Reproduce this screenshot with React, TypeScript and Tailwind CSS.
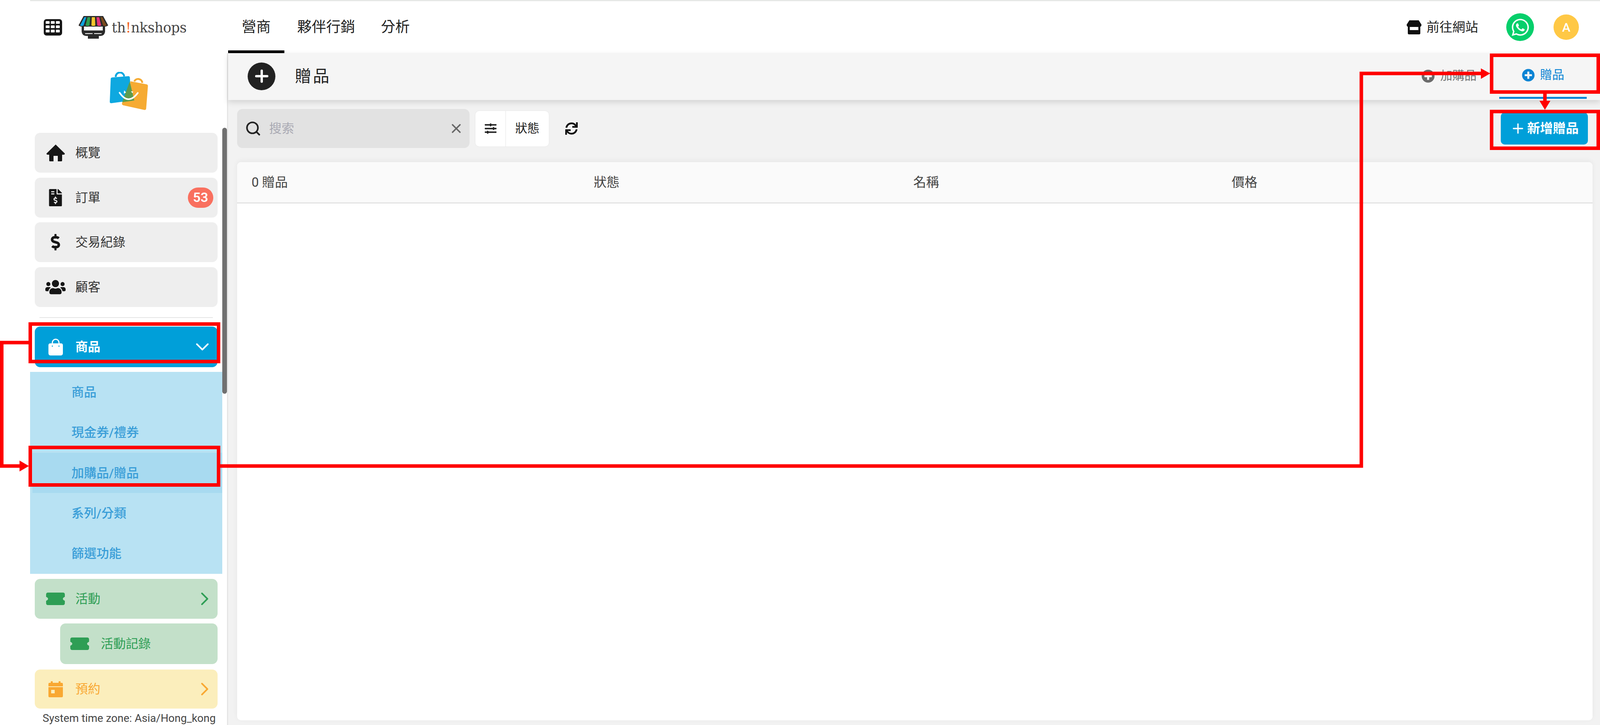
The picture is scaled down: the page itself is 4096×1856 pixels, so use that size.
import { ReactNode } from "react";
import { ChevronDown, ChevronRight, Plus, Search, X } from "lucide-react";
import {
  FaDollarSign,
  FaFileInvoiceDollar,
  FaPlusCircle,
  FaSlidersH,
  FaSync,
  FaUsers,
  FaWhatsapp,
} from "react-icons/fa";

function GridIcon() {
  const cells = [4, 17, 30];
  const rows = [5, 16, 27];
  return (
    <svg width="47" height="42" viewBox="0 0 47 42">
      <rect width="47" height="42" rx="7" fill="#161616" />
      {rows.map((y) =>
        cells.map((x) => <rect key={`${x}-${y}`} x={x + 1} y={y} width="10" height="7" rx="1.5" fill="#fff" />)
      )}
    </svg>
  );
}

function ShopLogo() {
  return (
    <svg width="78" height="62" viewBox="0 0 78 62">
      <path d="M9 26 L9 42 Q10 52 20 53 L25 53 L25 60 L53 60 L53 53 L58 53 Q68 52 69 42 L69 26 Z" fill="#2b2b2b" />
      <path d="M15 29 H63 V39 H15 Z" fill="#fff" />
      <rect x="18" y="46" width="19" height="2" fill="#fff" />
      <rect x="41" y="46" width="19" height="2" fill="#fff" />
      <path d="M14 2 H64 L77 26 Q70 32 62 27 Q55 32 47 27 Q39 32 31 27 Q23 32 15 27 Q8 32 1 26 Z" fill="#2b2b2b" />
      <path d="M5 26 L16 5 H21 L14 26 Q10 29 5 26 Z" fill="#0ea5e0" />
      <path d="M19 26 L24 5 H31 L29 26 Q24 29 19 26 Z" fill="#2e9e4f" />
      <path d="M34 26 L35 5 H43 L44 26 Q39 29 34 26 Z" fill="#f5c52c" />
      <path d="M49 26 L47 5 H54 L59 26 Q54 29 49 26 Z" fill="#e6337c" />
      <path d="M64 26 L57 5 H62 L73 26 Q68 29 64 26 Z" fill="#7a4a1c" />
    </svg>
  );
}

function BagsLogo() {
  return (
    <svg width="98" height="99" viewBox="0 0 320 315">
      <path d="M50 38 A35 35 0 0 1 120 34" fill="none" stroke="#0ea8e0" strokeWidth="16" />
      <path d="M205 76 A35 35 0 0 1 272 88" fill="none" stroke="#f6ab33" strokeWidth="16" />
      <path d="M20 42 L155 32 Q168 32 168 44 L180 235 L12 258 Q0 258 0 246 L8 54 Q8 44 20 42 Z" fill="#0ea8e0" />
      <path d="M172 74 L310 100 Q320 104 319 114 L304 305 Q300 316 290 314 L112 275 Q100 270 102 258 L108 245 L165 235 Z" fill="#f6ab33" />
      <path d="M167 75 L205 235 L104 250 Z" fill="#5c9c4e" />
      <path d="M82 170 Q155 278 234 172" fill="none" stroke="#fff" strokeWidth="13" strokeLinecap="round" />
      <path d="M120 150 L136 168 L118 178 Z" fill="#fff" />
      <path d="M176 158 L196 160 L190 174 Z" fill="#fff" />
    </svg>
  );
}

function HomeIcon() {
  return (
    <svg width="47" height="43" viewBox="0 0 47 43" fill="#161616">
      <path d="M23.5 0 L47 23 Q47 26 44 26 L40 26 L40 41 Q40 43 38 43 L29 43 L29 29 L18 29 L18 43 L9 43 Q7 43 7 41 L7 26 L3 26 Q0 26 0 23 Z" />
    </svg>
  );
}

function StoreIcon() {
  return (
    <svg width="38" height="36" viewBox="0 0 38 36" fill="#111">
      <path d="M7 0 H31 L38 11 Q38 17 32 17 L6 17 Q0 17 0 11 Z" />
      <path d="M3 15 H8 V25 H30 V15 H35 V33 Q35 36 32 36 H6 Q3 36 3 33 Z" />
    </svg>
  );
}

function BagIcon() {
  return (
    <svg width="37" height="43" viewBox="0 0 37 43">
      <path d="M10 15 V10 A8.5 8.5 0 0 1 27 10 V15" fill="none" stroke="#fff" strokeWidth="3" />
      <path d="M5 12 H32 Q37 12 37 17 V37 Q37 43 31 43 H6 Q0 43 0 37 V17 Q0 12 5 12 Z" fill="#fff" />
      <circle cx="10" cy="19" r="1.6" fill="#009fd9" />
      <circle cx="27" cy="19" r="1.6" fill="#009fd9" />
    </svg>
  );
}

function TicketIcon() {
  return (
    <svg width="48" height="32" viewBox="0 0 48 32" fill="#2e9e55">
      <path d="M5 0 H43 Q48 0 48 5 V11 Q43 13 43 16 Q43 19 48 21 V27 Q48 32 43 32 H5 Q0 32 0 27 V21 Q5 19 5 16 Q5 13 0 11 V5 Q0 0 5 0 Z" />
    </svg>
  );
}

function CalendarIcon() {
  return (
    <svg width="37" height="41" viewBox="0 0 37 41" fill="#f9a832">
      <rect x="6" y="0" width="5" height="8" rx="1" />
      <rect x="26" y="0" width="5" height="8" rx="1" />
      <path d="M3 4 H34 Q37 4 37 7 V13 H0 V7 Q0 4 3 4 Z" />
      <path d="M0 15 H37 V38 Q37 41 34 41 H3 Q0 41 0 38 Z" />
      <rect x="7" y="22" width="9" height="9" fill="#fbeebc" />
    </svg>
  );
}

function SideItem({
  icon,
  label,
  className,
  trailing,
}: {
  icon: ReactNode;
  label: string;
  className: string;
  trailing?: ReactNode;
}) {
  return (
    <div className={`flex items-center rounded-[14px] pl-[27px] mx-[12px] text-[32px] ${className}`}>
      <span className="flex w-[52px] justify-center">{icon}</span>
      <span className="ml-[25px]">{label}</span>
      {trailing}
    </div>
  );
}

const subItems = ["商品", "現金券/禮券", "加購品/贈品", "系列/分類", "篩選功能"];
const columns = ["0 贈品", "狀態", "名稱", "價格"];

function Annotations() {
  const boxes = [
    [73, 825, 491, 105],
    [73, 1141, 491, 105],
    [3814, 137, 282, 103],
    [3814, 281, 282, 103],
  ];
  return (
    <svg className="absolute left-0 top-0 z-20 pointer-events-none" width="4096" height="1856" viewBox="0 0 4096 1856">
      {boxes.map(([x, y, w, h]) => (
        <rect key={`${x}-${y}`} x={x + 4.5} y={y + 4.5} width={w - 9} height={h - 9} fill="none" stroke="#ff0000" strokeWidth="9" />
      ))}
      <polyline points="73,877 4.5,877 4.5,1193 52,1193" fill="none" stroke="#ff0000" strokeWidth="9" />
      <polygon points="50,1179 74,1193 50,1207" fill="#ff0000" />
      <polyline points="564,1193 3485,1193 3485,188 3793,188" fill="none" stroke="#ff0000" strokeWidth="9" />
      <polygon points="3791,175 3815,188 3791,202" fill="#ff0000" />
      <line x1="3955" y1="240" x2="3955" y2="260" stroke="#ff0000" strokeWidth="9" />
      <polygon points="3941,258 3969,258 3955,281" fill="#ff0000" />
    </svg>
  );
}

export default function App() {
  return (
    <div className="relative flex h-[1856px] w-[4096px] flex-col overflow-hidden bg-white font-['Roboto','Noto_Sans_CJK_TC',sans-serif] text-[#333]">
      <header className="ml-[77px] flex h-[136px] items-stretch border-t-[3px] border-[#e6e8e6]">
        <div className="flex w-[507px] items-center pl-[35px]">
          <GridIcon />
          <div className="ml-[41px]">
            <ShopLogo />
          </div>
          <span className="ml-[8px] mt-[4px] font-['DejaVu_Serif',serif] text-[35px] font-medium tracking-[-0.5px] text-[#444]">
            th<span className="text-[#f26522]">!</span>nkshops
          </span>
        </div>
        <nav className="flex text-[37px] text-[#222]">
          <div className="flex items-center border-b-[7px] border-black px-[35px] pt-[7px]">營商</div>
          <div className="flex items-center px-[33px]">夥伴行銷</div>
          <div className="flex items-center px-[33px]">分析</div>
        </nav>
        <div className="ml-auto flex items-center pr-[54px]">
          <StoreIcon />
          <span className="ml-[13px] text-[33px] text-[#222]">前往網站</span>
          <span className="ml-[72px] flex h-[71px] w-[71px] items-center justify-center rounded-full bg-[#06cf6b]">
            <FaWhatsapp size={50} color="#fff" />
          </span>
          <span className="ml-[50px] flex h-[65px] w-[65px] items-center justify-center rounded-full bg-[#ffc845] text-[32px] font-medium text-white">
            A
          </span>
        </div>
      </header>

      <div className="flex min-h-0 flex-1">
        <aside className="relative flex w-[584px] shrink-0 flex-col border-r-[3px] border-[#e5e5e5] pl-[77px] pr-[12px]">
          <div className="mt-[48px] flex justify-center pl-[14px]">
            <BagsLogo />
          </div>
          <div className="mt-[57px] flex flex-col gap-[12.5px]">
            <SideItem className="h-[102px] bg-[#eeeeee]" icon={<HomeIcon />} label="概覽" />
            <SideItem
              className="h-[102px] bg-[#eeeeee]"
              icon={<FaFileInvoiceDollar size={44} color="#161616" />}
              label="訂單"
              trailing={
                <span className="ml-auto mr-[11px] flex h-[52px] w-[65px] items-center justify-center rounded-full bg-[#f9705f] text-[34px] font-semibold text-white">
                  53
                </span>
              }
            />
            <SideItem className="h-[102px] bg-[#eeeeee]" icon={<FaDollarSign size={42} color="#161616" />} label="交易紀錄" />
            <SideItem className="h-[102px] bg-[#eeeeee]" icon={<FaUsers size={54} color="#161616" />} label="顧客" />
          </div>
          <div className="mx-[24px] mt-[26px] h-[3px] bg-[#e5e5e5]" />
          <SideItem
            className="mt-[22px] h-[104px] bg-[#009fd9] font-bold text-white"
            icon={<BagIcon />}
            label="商品"
            trailing={<ChevronDown className="ml-auto mr-[11px]" size={56} strokeWidth={1.7} color="#fff" />}
          />
          <div className="mt-[12px] flex h-[518px] flex-col bg-[#b8e2f3] text-[32px] font-medium text-[#3a9ed8]">
            {subItems.map((s) => (
              <div
                key={s}
                className={
                  s === "加購品/贈品"
                    ? "ml-[6px] flex flex-1 items-center bg-[#a8daf0] pl-[100px]"
                    : "flex flex-1 items-center pl-[106px]"
                }
              >
                {s}
              </div>
            ))}
          </div>
          <SideItem
            className="mt-[13px] h-[102px] bg-[#c3e0c9] text-[#2e9e55]"
            icon={<TicketIcon />}
            label="活動"
            trailing={<ChevronRight className="ml-auto mr-[5px]" size={56} strokeWidth={1.7} color="#2e9e55" />}
          />
          <div className="ml-[77px] mr-[12px] mt-[12px] flex h-[105px] items-center rounded-[14px] bg-[#c3e0c9] pl-[26px] text-[32px] text-[#2e9e55]">
            <TicketIcon />
            <span className="ml-[30px]">活動記錄</span>
          </div>
          <SideItem
            className="mt-[14px] h-[100px] bg-[#fbeebc] text-[#f9a832]"
            icon={<CalendarIcon />}
            label="預約"
            trailing={<ChevronRight className="ml-auto mr-[5px]" size={56} strokeWidth={1.7} color="#f9a832" />}
          />
          <p className="mt-[8px] pl-[32px] text-[28px] leading-[34px] whitespace-nowrap text-[#444]">System time zone: Asia/Hong_kong</p>
          <div className="absolute left-[569px] top-[191px] h-[681px] w-[12px] rounded-full bg-[#707070]" />
        </aside>

        <main className="flex min-w-0 flex-1 flex-col bg-[#f2f2f2]">
          <div className="relative z-10 flex h-[120px] shrink-0 items-start bg-[#f5f5f5] pl-[50px] pr-[34px] shadow-[0_6px_14px_rgba(0,0,0,0.13)]">
            <div className="flex h-[118px] items-center">
              <span className="flex h-[71px] w-[71px] items-center justify-center rounded-full bg-[#222]">
                <Plus size={48} strokeWidth={3} color="#fff" />
              </span>
              <span className="ml-[50px] text-[42px] tracking-[4px] text-[#222]">贈品</span>
            </div>
            <div className="ml-auto flex h-[117px] items-center text-[31px] text-[#777]">
              <FaPlusCircle size={34} color="#6b6b6b" />
              <span className="ml-[14px]">加購品</span>
              <div className="ml-[58px] flex h-full w-[224px] items-center justify-center border-b-[5px] border-[#0b84d4] text-[#0b84d4]">
                <FaPlusCircle size={33} color="#0b84d4" />
                <span className="ml-[14px]">贈品</span>
              </div>
            </div>
          </div>

          <div className="flex min-h-0 flex-1 flex-col pb-[12px] pl-[23px] pr-[19px] pt-[23px]">
            <div className="flex h-[100px] shrink-0 items-center pr-[12px]">
              <div className="flex h-[100px] w-[595px] items-center rounded-[14px] bg-[#e2e2e2] pl-[20px] pr-[15px] text-[32px] text-[#a9a9b3]">
                <Search size={42} strokeWidth={2.4} color="#222" />
                <span className="ml-[20px]">搜索</span>
                <X className="ml-auto" size={38} strokeWidth={2.4} color="#666" />
              </div>
              <div className="ml-[15px] flex h-[91px] w-[188px] items-stretch rounded-[10px] bg-white text-[31px] text-[#222] shadow-[0_0_3px_rgba(0,0,0,0.08)]">
                <div className="flex w-[78px] items-center justify-center border-r border-[#e5e5e5]">
                  <FaSlidersH size={30} color="#222" />
                </div>
                <div className="flex flex-1 items-center justify-center">狀態</div>
              </div>
              <span className="ml-[42px] flex">
                <FaSync size={32} color="#111" />
              </span>
              <div className="ml-auto flex h-[82px] w-[223px] items-center justify-center gap-[4px] rounded-[10px] bg-[#009fd9] text-[33px] font-bold text-white">
                <Plus size={40} strokeWidth={2} color="#fff" />
                新增贈品
              </div>
            </div>

            <section className="mt-[36px] flex min-h-0 flex-1 flex-col overflow-hidden rounded-[10px] bg-white shadow-[0_-3px_14px_rgba(0,0,0,0.05)]">
              <div className="grid h-[106px] shrink-0 grid-cols-[876px_818px_815px_1fr] items-center border-b-[3px] border-[#e3e3e3] bg-[#fafafa] pl-[37px] text-[33px] text-[#444]">
                {columns.map((c) => (
                  <span key={c}>{c}</span>
                ))}
              </div>
            </section>
          </div>
        </main>
      </div>

      <Annotations />
    </div>
  );
}
